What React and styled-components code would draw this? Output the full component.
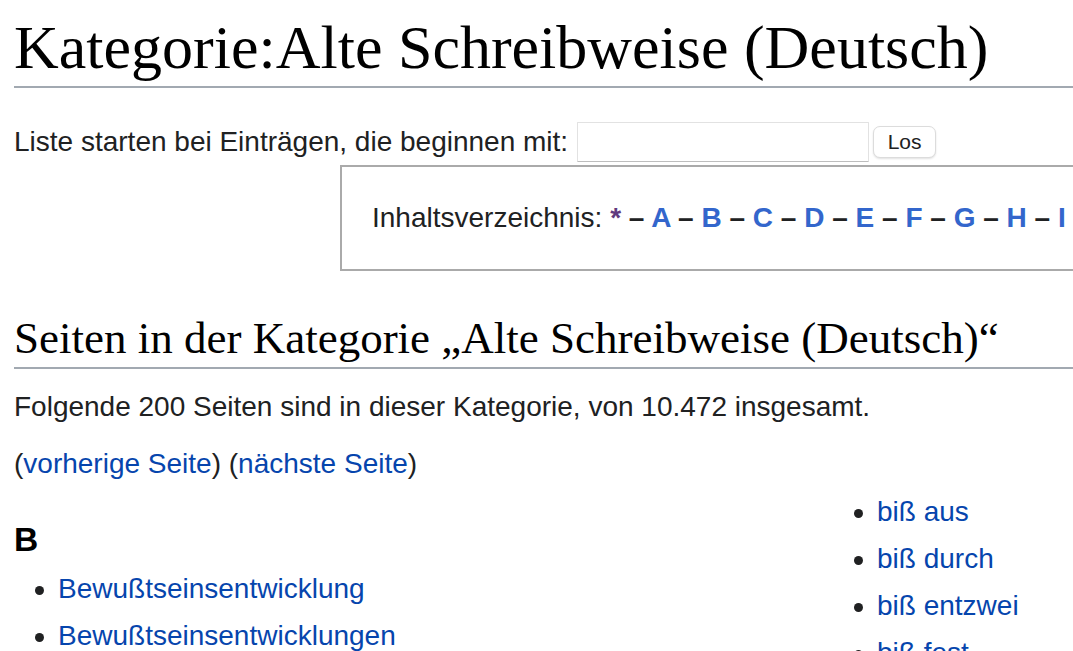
import React from "react";
import styled, { createGlobalStyle } from "styled-components";

const Global = createGlobalStyle`
  html, body { margin: 0; padding: 0; background: #fff; }
  body { overflow: hidden; font-family: "Liberation Sans", Arial, sans-serif; color: #202122; }
`;

const Page = styled.div`
  padding: 8px 0 0 14px;
  overflow: hidden;
  height: 651px;
  box-sizing: border-box;
  font-size: 28px;
`;

const Title = styled.h1`
  margin: 0;
  font-family: "Liberation Serif", "Times New Roman", serif;
  font-weight: normal;
  font-size: 62px;
  line-height: 78px;
  color: #000;
  border-bottom: 2px solid #a2a9b1;
  white-space: nowrap;
`;

const SubTitle = styled.h2`
  margin: 38px 0 0;
  font-family: "Liberation Serif", "Times New Roman", serif;
  font-weight: normal;
  font-size: 45px;
  line-height: 58.5px;
  color: #000;
  border-bottom: 2px solid #a2a9b1;
  white-space: nowrap;
`;

const FormRow = styled.form`
  display: flex;
  align-items: center;
  margin-top: 34px;
  height: 40px;
  white-space: nowrap;
`;

const Label = styled.label`
  line-height: 40px;
  margin-right: 9px;
`;

const TextInput = styled.input`
  box-sizing: border-box;
  width: 292px;
  height: 40px;
  border: 1px solid #e2e2e2;
  border-bottom-color: #bdbdbd;
  border-radius: 1px;
  background: #fff;
  font-size: 20px;
  padding: 0 6px;
  outline: none;
`;

const Button = styled.button`
  box-sizing: border-box;
  margin-left: 4px;
  width: 63px;
  height: 32px;
  border: 1px solid #dcdcdc;
  border-radius: 7px;
  background: #fff;
  box-shadow: 0 1px 2px rgba(0, 0, 0, 0.12);
  font-family: "Liberation Sans", Arial, sans-serif;
  font-size: 21px;
  color: #202122;
  padding: 0;
`;

const TocBox = styled.div`
  margin: 3px 0 0 326px;
  width: 1400px;
  border: 2px solid #aaa;
  padding: 29px 30px 28px 30px;
  line-height: 44.8px;
  white-space: nowrap;
`;

const TocList = styled.b`
  font-weight: bold;
  color: #202122;
`;

const TocLink = styled.a`
  color: ${(p) => (p.$visited ? "#5f3a7e" : "#3366cc")};
  text-decoration: none;
`;

const Para = styled.p`
  margin: ${(p) => p.$mt}px 0 0;
  line-height: 44.8px;
  white-space: nowrap;
`;

const Link = styled.a`
  color: #0645ad;
  text-decoration: none;
`;

const Columns = styled.div`
  display: grid;
  grid-template-columns: repeat(3, 789px);
  column-gap: 30px;
  margin-top: 3px;
`;

const Group = styled.div`
  min-width: 0;
`;

const GroupHead = styled.h3`
  margin: 23px 0 0;
  font-size: 33.6px;
  line-height: 53.8px;
  font-weight: bold;
  color: #000;
`;

const List = styled.ul`
  margin: 0;
  padding-left: 44px;
  list-style: none;
`;

const Item = styled.li`
  line-height: 44.8px;
  margin-bottom: 2.2px;
  white-space: nowrap;
  &::before {
    content: "";
    display: inline-block;
    width: 9px;
    height: 9px;
    border-radius: 50%;
    background: #202122;
    margin: 0 14.5px 0 -23.5px;
    vertical-align: middle;
  }
`;

const letters = ["A", "B", "C", "D", "E", "F", "G", "H", "I", "J", "K", "L", "M", "N", "O", "P", "Q", "R", "S", "T", "U", "V", "W", "X", "Y", "Z"];

export default function App() {
  return (
    <>
      <Global />
      <Page>
        <Title>Kategorie:Alte Schreibweise (Deutsch)</Title>
        <FormRow onSubmit={(e) => e.preventDefault()}>
          <Label htmlFor="from">Liste starten bei Einträgen, die beginnen mit:</Label>
          <TextInput id="from" type="text" />
          <Button type="submit">Los</Button>
        </FormRow>
        <TocBox>
          Inhaltsverzeichnis:{" "}
          <TocList>
            <TocLink href="#" $visited>*</TocLink>
            {letters.map((l) => (
              <React.Fragment key={l}>
                {" – "}
                <TocLink href="#">{l}</TocLink>
              </React.Fragment>
            ))}
          </TocList>
        </TocBox>
        <SubTitle>Seiten in der Kategorie „Alte Schreibweise (Deutsch)“</SubTitle>
        <Para $mt={16}>Folgende 200 Seiten sind in dieser Kategorie, von 10.472 insgesamt.</Para>
        <Para $mt={12}>
          (<Link href="#">vorherige Seite</Link>) (<Link href="#">nächste Seite</Link>)
        </Para>
        <Columns>
          <Group>
            <GroupHead>B</GroupHead>
            <List>
              <Item><Link href="#">Bewußtseinsentwicklung</Link></Item>
              <Item><Link href="#">Bewußtseinsentwicklungen</Link></Item>
              <Item><Link href="#">Bewußtseinserweiterung</Link></Item>
            </List>
          </Group>
          <Group>
            <List>
              <Item><Link href="#">biß aus</Link></Item>
              <Item><Link href="#">biß durch</Link></Item>
              <Item><Link href="#">biß entzwei</Link></Item>
              <Item><Link href="#">biß fest</Link></Item>
            </List>
          </Group>
          <Group>
            <List>
              <Item><Link href="#">bißt</Link></Item>
            </List>
          </Group>
        </Columns>
      </Page>
    </>
  );
}
